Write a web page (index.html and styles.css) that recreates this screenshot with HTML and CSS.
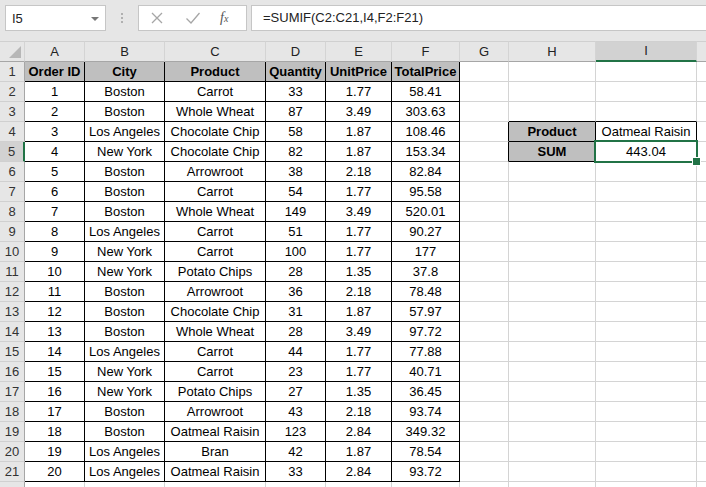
FILE: index.html
```html
<!DOCTYPE html>
<html lang="en">
<head>
    <meta charset="UTF-8">
    <title>SUMIF - Sheet1</title>
    <link rel="stylesheet" href="styles.css">
</head>
<body>
    <div class="toolbar">
        <div class="namebox">
            <span>I5</span>
            <span class="caret"></span>
        </div>
        <div class="grip">
            <span></span><span></span><span></span>
        </div>
        <div class="fx-buttons">
            <svg class="btn" width="14" height="14" viewBox="0 0 14 14">
                <path d="M2 2 L12 12 M12 2 L2 12" stroke="#a6a6a6" stroke-width="1.3" fill="none"/>
            </svg>
            <svg class="btn" width="16" height="14" viewBox="0 0 16 14">
                <path d="M1.5 7.5 L6 12 L14.5 2" stroke="#a6a6a6" stroke-width="1.3" fill="none"/>
            </svg>
            <span class="fx">f<small>x</small></span>
        </div>
        <div class="formula">=SUMIF(C2:C21,I4,F2:F21)</div>
    </div>

    <div class="sheet">
        <table class="grid">
            <colgroup>
                <col class="c-rh">
                <col class="c-a">
                <col class="c-b">
                <col class="c-c">
                <col class="c-d">
                <col class="c-e">
                <col class="c-f">
                <col class="c-g">
                <col class="c-h">
                <col class="c-i">
                <col class="c-j">
            </colgroup>
            <thead>
                <tr>
                    <th class="corner"><span class="tri"></span></th>
                    <th class="ch">A</th>
                    <th class="ch">B</th>
                    <th class="ch">C</th>
                    <th class="ch">D</th>
                    <th class="ch">E</th>
                    <th class="ch">F</th>
                    <th class="ch">G</th>
                    <th class="ch">H</th>
                    <th class="ch active">I</th>
                    <th class="ch"></th>
                </tr>
            </thead>
            <tbody>
                <tr><th class="rh">1</th><td class="d hd">Order ID</td><td class="d hd">City</td><td class="d hd">Product</td><td class="d hd">Quantity</td><td class="d hd">UnitPrice</td><td class="d hd">TotalPrice</td><td></td><td></td><td></td><td></td></tr>
                <tr><th class="rh">2</th><td class="d">1</td><td class="d">Boston</td><td class="d">Carrot</td><td class="d">33</td><td class="d">1.77</td><td class="d">58.41</td><td></td><td></td><td></td><td></td></tr>
                <tr><th class="rh">3</th><td class="d">2</td><td class="d">Boston</td><td class="d">Whole Wheat</td><td class="d">87</td><td class="d">3.49</td><td class="d">303.63</td><td></td><td class="above"></td><td class="above"></td><td></td></tr>
                <tr><th class="rh">4</th><td class="d">3</td><td class="d">Los Angeles</td><td class="d">Chocolate Chip</td><td class="d">58</td><td class="d">1.87</td><td class="d">108.46</td><td class="before"></td><td class="d hd">Product</td><td class="d">Oatmeal Raisin</td><td></td></tr>
                <tr><th class="rh active">5</th><td class="d">4</td><td class="d">New York</td><td class="d">Chocolate Chip</td><td class="d">82</td><td class="d">1.87</td><td class="d">153.34</td><td class="before"></td><td class="d hd">SUM</td><td class="d sel">443.04</td><td></td></tr>
                <tr><th class="rh">6</th><td class="d">5</td><td class="d">Boston</td><td class="d">Arrowroot</td><td class="d">38</td><td class="d">2.18</td><td class="d">82.84</td><td></td><td></td><td></td><td></td></tr>
                <tr><th class="rh">7</th><td class="d">6</td><td class="d">Boston</td><td class="d">Carrot</td><td class="d">54</td><td class="d">1.77</td><td class="d">95.58</td><td></td><td></td><td></td><td></td></tr>
                <tr><th class="rh">8</th><td class="d">7</td><td class="d">Boston</td><td class="d">Whole Wheat</td><td class="d">149</td><td class="d">3.49</td><td class="d">520.01</td><td></td><td></td><td></td><td></td></tr>
                <tr><th class="rh">9</th><td class="d">8</td><td class="d">Los Angeles</td><td class="d">Carrot</td><td class="d">51</td><td class="d">1.77</td><td class="d">90.27</td><td></td><td></td><td></td><td></td></tr>
                <tr><th class="rh">10</th><td class="d">9</td><td class="d">New York</td><td class="d">Carrot</td><td class="d">100</td><td class="d">1.77</td><td class="d">177</td><td></td><td></td><td></td><td></td></tr>
                <tr><th class="rh">11</th><td class="d">10</td><td class="d">New York</td><td class="d">Potato Chips</td><td class="d">28</td><td class="d">1.35</td><td class="d">37.8</td><td></td><td></td><td></td><td></td></tr>
                <tr><th class="rh">12</th><td class="d">11</td><td class="d">Boston</td><td class="d">Arrowroot</td><td class="d">36</td><td class="d">2.18</td><td class="d">78.48</td><td></td><td></td><td></td><td></td></tr>
                <tr><th class="rh">13</th><td class="d">12</td><td class="d">Boston</td><td class="d">Chocolate Chip</td><td class="d">31</td><td class="d">1.87</td><td class="d">57.97</td><td></td><td></td><td></td><td></td></tr>
                <tr><th class="rh">14</th><td class="d">13</td><td class="d">Boston</td><td class="d">Whole Wheat</td><td class="d">28</td><td class="d">3.49</td><td class="d">97.72</td><td></td><td></td><td></td><td></td></tr>
                <tr><th class="rh">15</th><td class="d">14</td><td class="d">Los Angeles</td><td class="d">Carrot</td><td class="d">44</td><td class="d">1.77</td><td class="d">77.88</td><td></td><td></td><td></td><td></td></tr>
                <tr><th class="rh">16</th><td class="d">15</td><td class="d">New York</td><td class="d">Carrot</td><td class="d">23</td><td class="d">1.77</td><td class="d">40.71</td><td></td><td></td><td></td><td></td></tr>
                <tr><th class="rh">17</th><td class="d">16</td><td class="d">New York</td><td class="d">Potato Chips</td><td class="d">27</td><td class="d">1.35</td><td class="d">36.45</td><td></td><td></td><td></td><td></td></tr>
                <tr><th class="rh">18</th><td class="d">17</td><td class="d">Boston</td><td class="d">Arrowroot</td><td class="d">43</td><td class="d">2.18</td><td class="d">93.74</td><td></td><td></td><td></td><td></td></tr>
                <tr><th class="rh">19</th><td class="d">18</td><td class="d">Boston</td><td class="d">Oatmeal Raisin</td><td class="d">123</td><td class="d">2.84</td><td class="d">349.32</td><td></td><td></td><td></td><td></td></tr>
                <tr><th class="rh">20</th><td class="d">19</td><td class="d">Los Angeles</td><td class="d">Bran</td><td class="d">42</td><td class="d">1.87</td><td class="d">78.54</td><td></td><td></td><td></td><td></td></tr>
                <tr><th class="rh">21</th><td class="d">20</td><td class="d">Los Angeles</td><td class="d">Oatmeal Raisin</td><td class="d">33</td><td class="d">2.84</td><td class="d">93.72</td><td></td><td></td><td></td><td></td></tr>
                <tr><th class="rh"></th><td></td><td></td><td></td><td></td><td></td><td></td><td></td><td></td><td></td><td></td></tr>
            </tbody>
        </table>
    </div>
</body>
</html>
```

FILE: styles.css
```css
* {
    margin: 0;
    padding: 0;
    box-sizing: border-box;
}

html, body {
    width: 706px;
    height: 487px;
    overflow: hidden;
}

body {
    font-family: "Liberation Sans", Arial, sans-serif;
    font-size: 13px;
    color: #000;
    background: #fff;
}

/* formula bar */
.toolbar {
    height: 41px;
    background: #e6e6e6;
    display: flex;
    align-items: flex-start;
    padding: 5px 0 0 5px;
}

.namebox {
    width: 101px;
    height: 26px;
    background: #fff;
    border: 1px solid #c6c6c6;
    display: flex;
    align-items: center;
    justify-content: space-between;
    padding: 0 6px 0 6px;
    color: #222;
}

.caret {
    width: 0;
    height: 0;
    border-left: 4px solid transparent;
    border-right: 4px solid transparent;
    border-top: 4px solid #777;
    margin-top: 1px;
}

.grip {
    width: 32px;
    height: 26px;
    display: flex;
    flex-direction: column;
    align-items: center;
    justify-content: center;
    gap: 2px;
}

.grip span {
    width: 2px;
    height: 2px;
    background: #b0b0b0;
}

.fx-buttons {
    width: 109px;
    height: 26px;
    background: #fff;
    border: 1px solid #c6c6c6;
    display: flex;
    align-items: center;
    padding-left: 11px;
    gap: 21px;
}

.fx {
    font-family: "Liberation Serif", "Times New Roman", serif;
    font-style: italic;
    font-size: 14px;
    color: #555;
    margin-left: -2px;
}

.fx small {
    font-size: 10px;
}

.formula {
    flex: 1;
    height: 26px;
    margin-left: 4px;
    background: #fff;
    border: 1px solid #c6c6c6;
    border-right: none;
    padding: 0 11px;
    line-height: 24px;
    color: #222;
}

/* sheet grid */
.sheet {
    width: 706px;
    overflow: hidden;
}

.grid {
    table-layout: fixed;
    border-collapse: separate;
    border-spacing: 0;
    width: 761px;
}

.c-rh { width: 25px; }
.c-a { width: 60px; }
.c-b { width: 80px; }
.c-c { width: 101px; }
.c-d { width: 60px; }
.c-e { width: 66px; }
.c-f { width: 68px; }
.c-g { width: 49px; }
.c-h { width: 87px; }
.c-i { width: 101px; }
.c-j { width: 64px; }

.grid th,
.grid td {
    height: 20px;
    padding: 0 1px;
    border-right: 1px solid #d4d4d4;
    border-bottom: 1px solid #d4d4d4;
    text-align: center;
    white-space: nowrap;
    overflow: hidden;
    font-weight: normal;
    line-height: 18px;
}

.grid thead th {
    height: 19px;
    background: #e6e6e6;
    color: #222;
    border-top: 1px solid #d0d0d0;
    border-bottom-color: #a6a6a6;
}

.corner {
    position: relative;
}

.tri {
    position: absolute;
    right: 3px;
    bottom: 3px;
    width: 0;
    height: 0;
    border-left: 12px solid transparent;
    border-bottom: 12px solid #b7b7b7;
}

.grid .rh {
    background: #e6e6e6;
    color: #333;
    border-right-color: #a6a6a6;
    border-bottom-color: #d0d0d0;
}

.grid thead .active {
    background: #d2d2d2;
    border-bottom: 2px solid #217346;
}

.grid .rh.active {
    background: #d2d2d2;
    border-right: 2px solid #217346;
}

/* data cells */
.grid .d {
    border-right-color: #000;
    border-bottom-color: #000;
}

.grid .hd {
    background: #bfbfbf;
    font-weight: bold;
}

.grid .above {
    border-bottom-color: #000;
}

.grid .before {
    border-right-color: #000;
}

.grid .sel {
    position: relative;
    overflow: visible;
}

.grid .sel::after {
    content: '';
    position: absolute;
    top: -2px;
    left: -2px;
    right: -2px;
    bottom: -2px;
    border: 2px solid #217346;
}

.grid .sel::before {
    content: '';
    position: absolute;
    right: -5px;
    bottom: -5px;
    width: 7px;
    height: 7px;
    background: #217346;
    border: 1px solid #fff;
    z-index: 1;
}
```
